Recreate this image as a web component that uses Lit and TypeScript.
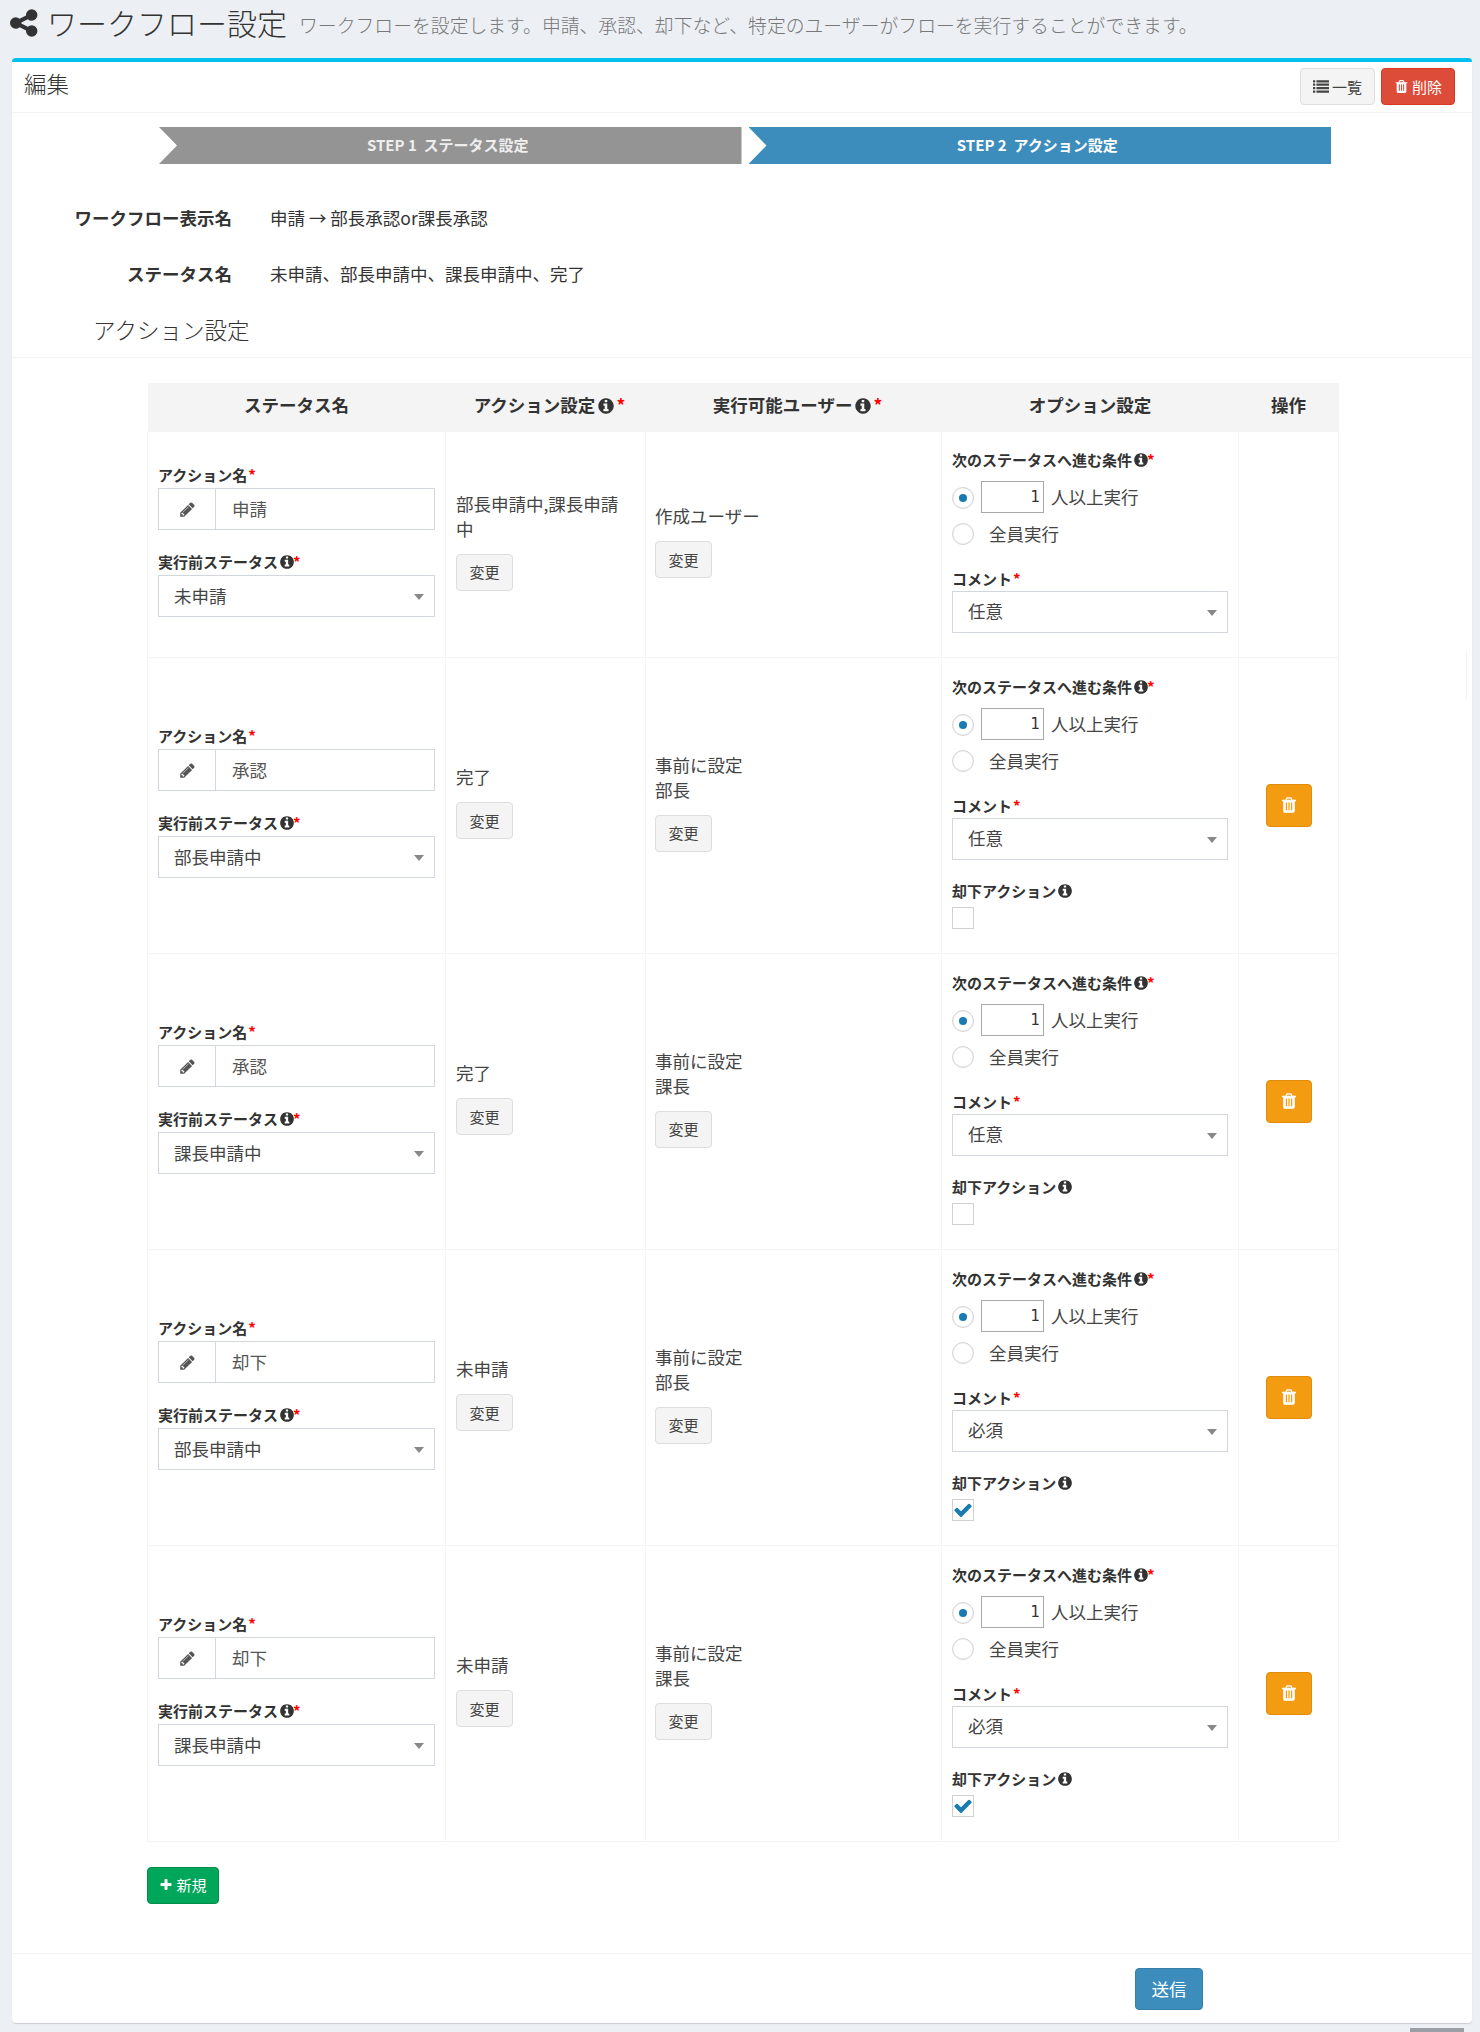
import { LitElement, html, css, svg } from 'lit';
import { customElement } from 'lit/decorators.js';

const PATHS = {
  share:
    'M1216 1024q133 0 226.5 93.5t93.5 226.5-93.5 226.5-226.5 93.5-226.5-93.5-93.5-226.5q0-12 2-34l-360-180q-92 86-218 86-133 0-226.5-93.5t-93.5-226.5 93.5-226.5 226.5-93.5q126 0 218 86l360-180q-2-22-2-34 0-133 93.5-226.5t226.5-93.5 226.5 93.5 93.5 226.5-93.5 226.5-226.5 93.5q-126 0-218-86l-360 180q2 22 2 34t-2 34l360 180q92-86 218-86z',
  trash:
    'M704 1376v-704q0-14-9-23t-23-9h-64q-14 0-23 9t-9 23v704q0 14 9 23t23 9h64q14 0 23-9t9-23zm256 0v-704q0-14-9-23t-23-9h-64q-14 0-23 9t-9 23v704q0 14 9 23t23 9h64q14 0 23-9t9-23zm256 0v-704q0-14-9-23t-23-9h-64q-14 0-23 9t-9 23v704q0 14 9 23t23 9h64q14 0 23-9t9-23zm-544-992h448l-48-117q-7-9-17-11h-317q-10 2-17 11zm928 32v64q0 14-9 23t-23 9h-96v948q0 83-47 143.5t-113 60.5h-832q-66 0-113-58.5t-47-141.5v-952h-96q-14 0-23-9t-9-23v-64q0-14 9-23t23-9h309l70-167q15-37 54-63t79-26h320q40 0 79 26t54 63l70 167h309q14 0 23 9t9 23z',
  info:
    'M1152 1376v-160q0-14-9-23t-23-9h-96v-512q0-14-9-23t-23-9h-320q-14 0-23 9t-9 23v160q0 14 9 23t23 9h96v320h-96q-14 0-23 9t-9 23v160q0 14 9 23t23 9h448q14 0 23-9t9-23zm-128-896v-160q0-14-9-23t-23-9h-192q-14 0-23 9t-9 23v160q0 14 9 23t23 9h192q14 0 23-9t9-23zm640 416q0 209-103 385.5t-279.5 279.5-385.5 103-385.5-103-279.5-279.5-103-385.5 103-385.5 279.5-279.5 385.5-103 385.5 103 279.5 279.5 103 385.5z',
  pencil:
    'M491 1536l91-91-235-235-91 91v107h128v128h107zm523-928q0-22-22-22-10 0-17 7l-542 542q-7 7-7 17 0 22 22 22 10 0 17-7l542-542q7-7 7-17zm-54-192l416 416-832 832h-416v-416zm683 96q0 53-37 90l-166 166-416-416 166-165q36-38 90-38 53 0 91 38l235 234q37 39 37 91z',
  check:
    'M1671 566q0 40-28 68l-724 724-136 136q-28 28-68 28t-68-28l-136-136-362-362q-28-28-28-68t28-68l136-136q28-28 68-28t68 28l294 295 656-657q28-28 68-28t68 28l136 136q28 28 28 68z',
  plus:
    'M1600 736v192q0 40-28 68t-68 28h-416v416q0 40-28 68t-68 28h-192q-40 0-68-28t-28-68v-416h-416q-40 0-68-28t-28-68v-192q0-40 28-68t68-28h416v-416q0-40 28-68t68-28h192q40 0 68 28t28 68v416h416q40 0 68 28t28 68z',
  list:
    'M256 1312v192q0 13-9.500 22.500t-22.500 9.500h-192q-13 0-22.500-9.500t-9.500-22.500v-192q0-13 9.500-22.500t22.500-9.500h192q13 0 22.500 9.500t9.500 22.500zm0-384v192q0 13-9.500 22.500t-22.500 9.500h-192q-13 0-22.500-9.500t-9.500-22.500v-192q0-13 9.500-22.500t22.500-9.500h192q13 0 22.500 9.500t9.500 22.500zm0-384v192q0 13-9.500 22.500t-22.500 9.500h-192q-13 0-22.500-9.500t-9.500-22.500v-192q0-13 9.500-22.500t22.500-9.500h192q13 0 22.500 9.500t9.500 22.500zm1536 768v192q0 13-9.500 22.500t-22.500 9.500h-1344q-13 0-22.500-9.500t-9.500-22.500v-192q0-13 9.500-22.500t22.500-9.500h1344q13 0 22.500 9.500t9.500 22.500zm-1536-1152v192q0 13-9.500 22.500t-22.500 9.500h-192q-13 0-22.500-9.500t-9.500-22.500v-192q0-13 9.500-22.500t22.500-9.500h192q13 0 22.500 9.500t9.500 22.500zm1536 768v192q0 13-9.500 22.500t-22.500 9.500h-1344q-13 0-22.500-9.500t-9.500-22.500v-192q0-13 9.500-22.500t22.500-9.500h1344q13 0 22.500 9.500t9.500 22.500zm0-384v192q0 13-9.500 22.500t-22.500 9.500h-1344q-13 0-22.500-9.500t-9.500-22.500v-192q0-13 9.500-22.500t22.500-9.500h1344q13 0 22.500 9.500t9.500 22.500zm0-384v192q0 13-9.500 22.500t-22.500 9.500h-1344q-13 0-22.500-9.500t-9.500-22.500v-192q0-13 9.500-22.500t22.500-9.500h1344q13 0 22.500 9.500t9.500 22.500z',
};

const icon = (name: keyof typeof PATHS, size: number) =>
  html`<svg class="ic" width=${size} height=${size} viewBox="0 0 1792 1792" fill="currentColor">${svg`<path d=${PATHS[name]}></path>`}</svg>`;

type Row = {
  name: string;
  before: string;
  next: string[];
  users: string[];
  comment: string;
  reject: boolean | null;
};

const ROWS: Row[] = [
  { name: '申請', before: '未申請', next: ['部長申請中,課長申請中'], users: ['作成ユーザー'], comment: '任意', reject: null },
  { name: '承認', before: '部長申請中', next: ['完了'], users: ['事前に設定', '部長'], comment: '任意', reject: false },
  { name: '承認', before: '課長申請中', next: ['完了'], users: ['事前に設定', '課長'], comment: '任意', reject: false },
  { name: '却下', before: '部長申請中', next: ['未申請'], users: ['事前に設定', '部長'], comment: '必須', reject: true },
  { name: '却下', before: '課長申請中', next: ['未申請'], users: ['事前に設定', '課長'], comment: '必須', reject: true },
];

@customElement('app-root')
export class AppRoot extends LitElement {
  static styles = css`
    :host {
      display: block;
      position: relative;
      height: 2032px;
      overflow: hidden;
      background: #ecf0f5;
      color: #333;
      font-family: 'Noto Sans CJK JP', 'Liberation Sans', sans-serif;
      font-size: 17.5px;
      line-height: 25px;
    }
    * {
      box-sizing: border-box;
    }
    .ic {
      display: inline-block;
      flex: none;
    }
    .page-head {
      height: 58px;
      padding: 0 0 0 10px;
      display: flex;
      align-items: flex-start;
    }
    .page-head .ic {
      margin-top: 7px;
      color: #333;
    }
    .page-head h1 {
      margin: 2px 0 0 5px;
      font-size: 30px;
      line-height: 40px;
      font-weight: 300;
    }
    .page-head small {
      margin: 11px 0 0 12px;
      font-size: 18.83px;
      line-height: 28px;
      color: #777;
      font-weight: 300;
    }
    .box {
      margin: 0 8px 0 12px;
      height: 1965px;
      background: #fff;
      border-top: 4px solid #00c0ef;
      border-radius: 4px;
      box-shadow: 0 1px 1px rgba(0, 0, 0, 0.15);
    }
    .box-head {
      height: 51px;
      padding: 6px 17px 0 12px;
      border-bottom: 1px solid #f4f4f4;
      display: flex;
      justify-content: space-between;
      align-items: flex-start;
    }
    .box-head h3 {
      margin: -2px 0 0;
      font-size: 22.5px;
      line-height: 34px;
      font-weight: 300;
    }
    .tools {
      display: flex;
      gap: 6px;
    }
    .btn {
      display: inline-flex;
      align-items: center;
      justify-content: center;
      gap: 3px;
      height: 37px;
      border: 1px solid #ddd;
      border-radius: 4px;
      background: #f4f4f4;
      color: #444;
      font: inherit;
      font-size: 15px;
      line-height: 20px;
      padding: 0;
    }
    .btn.list {
      width: 75px;
    }
    .btn.danger {
      width: 74px;
      background: #dd4b39;
      border-color: #d73925;
      color: #fff;
    }
    .btn.change {
      width: 57px;
    }
    .btn.warn {
      width: 46px;
      height: 43px;
      background: #f39c12;
      border-color: #e08e0b;
      color: #fff;
    }
    .btn.add {
      width: 72px;
      background: #00a65a;
      border-color: #008d4c;
      color: #fff;
    }
    .btn.send {
      width: 68px;
      height: 42px;
      background: #3c8dbc;
      border-color: #367fa9;
      color: #fff;
      font-size: 17.5px;
    }
    .steps {
      display: flex;
      gap: 7px;
      margin: 14px 0 0 147px;
      width: 1172px;
    }
    .step {
      flex: 1;
      height: 37px;
      line-height: 36px;
      padding-right: 5px;
      text-align: center;
      color: #eee;
      background: #959494;
      font-size: 15px;
      font-weight: 700;
      clip-path: polygon(0 0, 100% 0, 100% 100%, 0 100%, 18px 50%);
    }
    .step.active {
      color: #fff;
      background: #3c8dbc;
    }
    .info {
      margin-top: 41px;
      margin-bottom: 17px;
      display: grid;
      grid-template-columns: 220px 1fr;
      column-gap: 38px;
      row-gap: 31px;
    }
    .info dt {
      text-align: right;
      font-weight: 700;
    }
    .info dd {
      margin: 0;
    }
    .sub-head {
      margin: 0;
      padding: 9px 0 11px 81px;
      font-size: 22.5px;
      line-height: 34px;
      font-weight: 300;
      border-bottom: 1px solid #f4f4f4;
    }
    .body {
      padding: 25px 0 0 135px;
    }
    table {
      width: 1191px;
      table-layout: fixed;
      border-collapse: collapse;
    }
    th {
      height: 48px;
      background: #f4f4f4;
      font-weight: 700;
      padding: 0 0 4px;
      text-align: center;
    }
    th:nth-child(2),
    th:nth-child(3) {
      padding-left: 8px;
    }
    th .ic {
      margin: 0 1px 0 2px;
      vertical-align: -3px;
    }
    td {
      border: 1px solid #f4f4f4;
      padding: 0 10px;
      vertical-align: middle;
    }
    td:nth-child(3) {
      padding-left: 9px;
    }
    td.opt {
      padding: 18px 10px 24px;
    }
    tbody tr:first-child td.opt {
      padding-top: 17px;
      padding-bottom: 24px;
    }
    td.center {
      text-align: center;
    }
    .stack {
      padding-bottom: 7px;
    }
    .stack .btn {
      margin-top: 13px;
    }
    .stack p {
      margin: 0;
      color: #444;
    }
    label,
    .label {
      display: flex;
      align-items: center;
      gap: 2px;
      font-size: 15px;
      line-height: 22px;
      font-weight: 700;
      margin-bottom: 2px;
    }
    label .ic,
    .label .ic {
      margin-left: -1px;
    }
    .req {
      color: #f00;
      margin-left: -1px;
    }
    .ic + .req {
      margin-left: -4px;
    }
    th .ic + .req {
      margin-left: 0;
    }
    .field + .field {
      margin-top: 21px;
    }
    .group {
      display: flex;
      height: 42px;
      border: 1px solid #d2d6de;
    }
    .addon {
      width: 57px;
      flex: none;
      display: flex;
      align-items: center;
      justify-content: center;
      color: #555;
      border-right: 1px solid #d2d6de;
    }
    .group input {
      flex: 1;
      min-width: 0;
      border: 0;
      outline: 0;
      padding: 0 16px 2px;
      font: inherit;
      color: #555;
      background: transparent;
    }
    .select {
      position: relative;
      height: 42px;
    }
    .select select {
      appearance: none;
      width: 100%;
      height: 100%;
      border: 1px solid #d2d6de;
      border-radius: 0;
      background: #fff;
      font: inherit;
      color: #444;
      padding: 0 15px 2px;
      outline: 0;
    }
    .select::after {
      content: '';
      position: absolute;
      right: 11px;
      top: 19px;
      border-style: solid;
      border-width: 6px 5px 0;
      border-color: #888 transparent transparent;
    }
    .radio-row {
      display: flex;
      align-items: center;
      gap: 7px;
      height: 32px;
      margin-top: 10px;
      color: #444;
    }
    .radio-row + .radio-row {
      margin-top: 5px;
    }
    .radio {
      width: 22px;
      height: 22px;
      flex: none;
      border: 1px solid #d4d4d4;
      border-radius: 50%;
      background: #fff;
      box-shadow: inset 0 0 1px #ccc;
      display: flex;
      align-items: center;
      justify-content: center;
    }
    .radio.on {
      margin-top: 2px;
    }
    .radio.on::after {
      content: '';
      width: 8px;
      height: 8px;
      border-radius: 50%;
      background: #1a7bb0;
    }
    .num {
      width: 63px;
      height: 32px;
      border: 1px solid #a9a9a9;
      font-family: 'DejaVu Sans', 'Liberation Sans', sans-serif;
      font-size: 15px;
      color: #333;
      text-align: right;
      padding: 0 3px;
      outline: 0;
    }
    .all {
      margin-left: 8px;
    }
    .comment {
      margin-top: 18px;
    }
    .comment .label {
      margin-bottom: 1px;
    }
    .reject {
      margin-top: 20px;
    }
    .box-check {
      width: 22px;
      height: 22px;
      margin-top: 5px;
      border: 1px solid #d0d0d0;
      display: flex;
      align-items: center;
      justify-content: center;
      color: #1a7bb0;
    }
    .actions {
      margin-top: 25px;
    }
    .foot {
      margin-top: 49px;
      height: 69px;
      border-top: 1px solid #f4f4f4;
      padding: 14px 0 0 1123px;
    }
    .scroll-hint {
      position: absolute;
      left: 1466px;
      top: 650px;
      width: 1px;
      height: 50px;
      background: #f4f4f4;
    }
    .scroll-thumb {
      position: absolute;
      left: 1410px;
      top: 2028px;
      width: 54px;
      height: 4px;
      background: #9a9fa5;
    }
  `;

  private infoIcon(size = 16) {
    return icon('info', size);
  }

  private renderStatus(row: Row) {
    return html`
      <div class="stack">
        <div class="field">
          <label>アクション名<span class="req">*</span></label>
          <div class="group">
            <span class="addon">${icon('pencil', 17)}</span>
            <input type="text" .value=${row.name} />
          </div>
        </div>
        <div class="field">
          <label>実行前ステータス ${this.infoIcon()}<span class="req">*</span></label>
          <div class="select">
            <select><option>${row.before}</option></select>
          </div>
        </div>
      </div>
    `;
  }

  private renderOption(row: Row) {
    return html`
      <div class="label">次のステータスへ進む条件 ${this.infoIcon()}<span class="req">*</span></div>
      <div class="radio-row">
        <span class="radio on"></span>
        <input class="num" type="text" value="1" />
        <span>人以上実行</span>
      </div>
      <div class="radio-row">
        <span class="radio"></span>
        <span class="all">全員実行</span>
      </div>
      <div class="comment">
        <div class="label">コメント<span class="req">*</span></div>
        <div class="select">
          <select><option>${row.comment}</option></select>
        </div>
      </div>
      ${row.reject === null
        ? ''
        : html`
            <div class="reject">
              <div class="label">却下アクション ${this.infoIcon()}</div>
              <div class="box-check">${row.reject ? icon('check', 20) : ''}</div>
            </div>
          `}
    `;
  }

  render() {
    return html`
      <header class="page-head">
        ${icon('share', 32)}
        <h1>ワークフロー設定</h1>
        <small>ワークフローを設定します。申請、承認、却下など、特定のユーザーがフローを実行することができます。</small>
      </header>
      <section class="box">
        <div class="box-head">
          <h3>編集</h3>
          <div class="tools">
            <button class="btn list">${icon('list', 16)}一覧</button>
            <button class="btn danger">${icon('trash', 15)}削除</button>
          </div>
        </div>
        <div class="steps">
          <div class="step">STEP 1&nbsp; ステータス設定</div>
          <div class="step active">STEP 2&nbsp; アクション設定</div>
        </div>
        <dl class="info">
          <dt>ワークフロー表示名</dt>
          <dd>申請 → 部長承認or課長承認</dd>
          <dt>ステータス名</dt>
          <dd>未申請、部長申請中、課長申請中、完了</dd>
        </dl>
        <h4 class="sub-head">アクション設定</h4>
        <div class="body">
          <table>
            <colgroup>
              <col style="width:298px" />
              <col style="width:200px" />
              <col style="width:296px" />
              <col style="width:297px" />
              <col style="width:100px" />
            </colgroup>
            <thead>
              <tr>
                <th>ステータス名</th>
                <th>アクション設定${this.infoIcon(18)}<span class="req">*</span></th>
                <th>実行可能ユーザー${this.infoIcon(18)}<span class="req">*</span></th>
                <th>オプション設定</th>
                <th>操作</th>
              </tr>
            </thead>
            <tbody>
              ${ROWS.map(
                (row, i) => html`
                  <tr>
                    <td>${this.renderStatus(row)}</td>
                    <td>
                      <div class="stack">
                        ${row.next.map((t) => html`<p>${t}</p>`)}
                        <button class="btn change">変更</button>
                      </div>
                    </td>
                    <td>
                      <div class="stack">
                        ${row.users.map((t) => html`<p>${t}</p>`)}
                        <button class="btn change">変更</button>
                      </div>
                    </td>
                    <td class="opt">${this.renderOption(row)}</td>
                    <td class="center">
                      ${i === 0 ? '' : html`<button class="btn warn">${icon('trash', 18)}</button>`}
                    </td>
                  </tr>
                `,
              )}
            </tbody>
          </table>
          <div class="actions">
            <button class="btn add">${icon('plus', 14)}新規</button>
          </div>
        </div>
        <div class="foot">
          <button class="btn send">送信</button>
        </div>
      </section>
      <div class="scroll-hint"></div>
      <div class="scroll-thumb"></div>
    `;
  }
}
